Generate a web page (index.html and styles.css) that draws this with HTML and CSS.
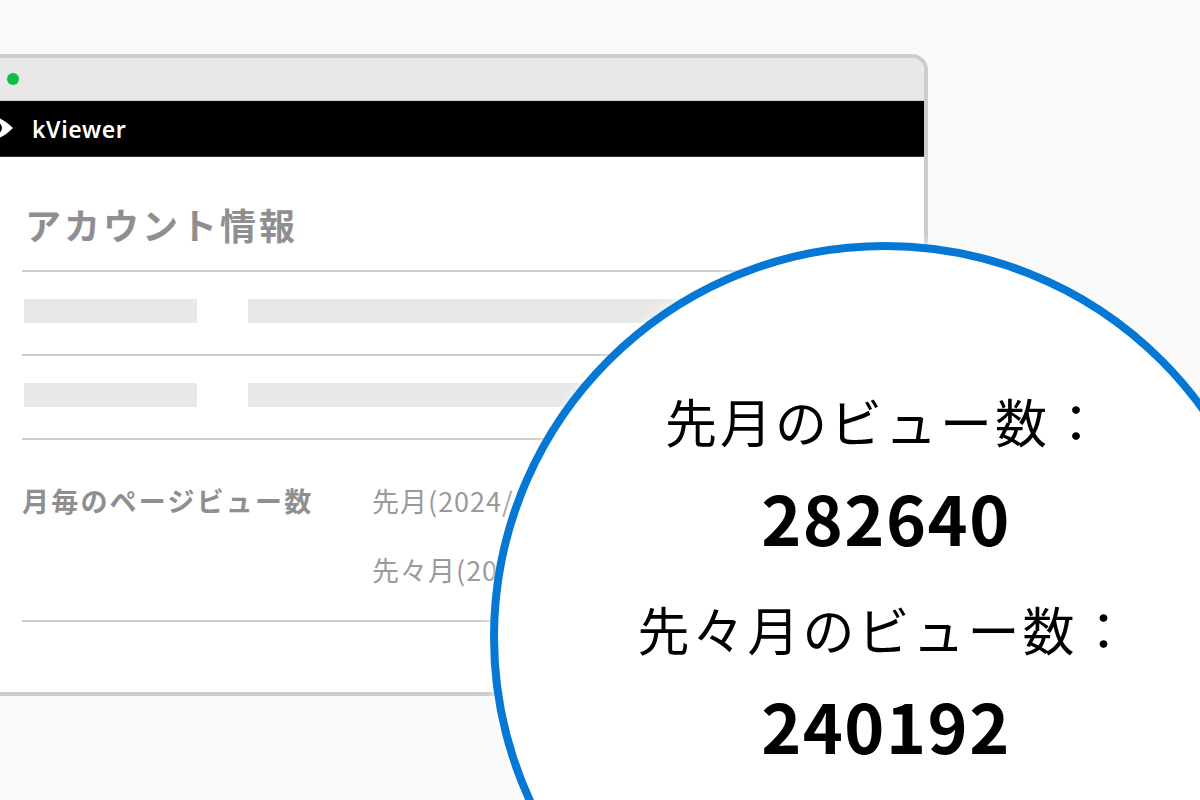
FILE: index.html
```html
<!DOCTYPE html>
<html lang="ja">
<head>
<meta charset="utf-8">
<title>kViewer</title>
<link rel="stylesheet" href="styles.css">
</head>
<body>
<div class="window">
  <div class="titlebar"><span class="dot"></span></div>
  <header class="appbar">
    <svg class="eye" width="14" height="24" viewBox="0 0 14 24"><path fill="#fff" fill-rule="evenodd" d="M-4 0 Q4 2 13 11 Q4 20 -4 22 Z M-4 5 A6 6 0 0 1 -4 17 Z"/></svg>
    <span class="brand">kViewer</span>
  </header>
  <main class="content">
    <h1 class="title">アカウント情報</h1>
    <div class="row"><span class="ph ph-label"></span><span class="ph ph-value"></span></div>
    <div class="row"><span class="ph ph-label"></span><span class="ph ph-value"></span></div>
    <div class="views">
      <div class="views-label">月毎のページビュー数</div>
      <div class="views-list">
        <div>先月(2024/</div>
        <div>先々月(2024/</div>
      </div>
    </div>
  </main>
</div>
<div class="lens">
  <div class="lens-label">先月のビュー数：</div>
  <div class="lens-num">282640</div>
  <div class="lens-label lens-second">先々月のビュー数：</div>
  <div class="lens-num">240192</div>
</div>
</body>
</html>
```
FILE: styles.css
```css
* { box-sizing: border-box; }
html, body { margin: 0; height: 100%; }
body {
  width: 1200px;
  height: 800px;
  overflow: hidden;
  position: relative;
  background: #f9f9f9;
  font-family: "Noto Sans CJK JP", "Noto Sans", sans-serif;
  padding: 54px 0 0;
}
.window {
  width: 928px;
  height: 642px;
  border: 4px solid #ccc;
  border-left: 0;
  border-radius: 0 16px 0 0;
  background: #fff;
  overflow: hidden;
  will-change: opacity;
}
.titlebar {
  height: 43px;
  background: #e8e8e8;
  display: flex;
  align-items: center;
  padding-left: 7px;
  border-bottom: 1px solid #ccc;
}
.dot { width: 12px; height: 12px; border-radius: 50%; background: #0dbf4a; }
.appbar {
  height: 56px;
  background: #000;
  border-bottom: 1px solid #333;
  display: flex;
  align-items: center;
  gap: 18px;
}
.eye { flex: none; }
.brand { color: #fff; font-family: "Noto Sans", sans-serif; font-weight: 600; font-size: 23px; letter-spacing: .6px; }
.content { padding: 0 0 0 22px; }
.title {
  height: 115px;
  margin: 0;
  padding: 40px 0 0 3px;
  border-bottom: 2px solid #ccc;
  color: #8f8f8f;
  font-size: 36px;
  line-height: 54px;
  font-weight: 700;
  letter-spacing: 3px;
}
.row {
  height: 84px;
  border-bottom: 2px solid #ccc;
  display: flex;
  align-items: center;
  gap: 51px;
  padding: 0 0 4px 2px;
}
.ph { height: 23.5px; background: #e8e8e8; }
.ph-label { width: 173px; }
.ph-value { width: 500px; }
.views {
  height: 182px;
  border-bottom: 2px solid #ccc;
  display: flex;
  padding-top: 42px;
}
.views-label { width: 350px; color: #8f8f8f; font-size: 27px; font-weight: 700; line-height: 38px; letter-spacing: 2.2px; }
.views-list { color: #9a9a9a; font-size: 27px; font-weight: 400; line-height: 38px; letter-spacing: 1px; display: flex; flex-direction: column; gap: 31px; }
.lens {
  position: absolute;
  left: 490px;
  top: 242px;
  width: 790px;
  height: 790px;
  border: 8px solid #0478d4;
  border-radius: 50%;
  background: #fff;
  box-shadow: 0 0 12px rgba(255, 255, 255, .7);
  display: flex;
  flex-direction: column;
  align-items: center;
  padding-top: 135px;
  color: #000;
  will-change: opacity;
}
.lens-label { font-size: 52px; line-height: 72px; font-weight: 400; letter-spacing: 3px; }
.lens-second { margin-top: 28px; }
.lens-num { font-size: 68px; line-height: 96px; font-weight: 700; letter-spacing: 1.5px; margin-top: 12px; padding-left: 2px; }
```
